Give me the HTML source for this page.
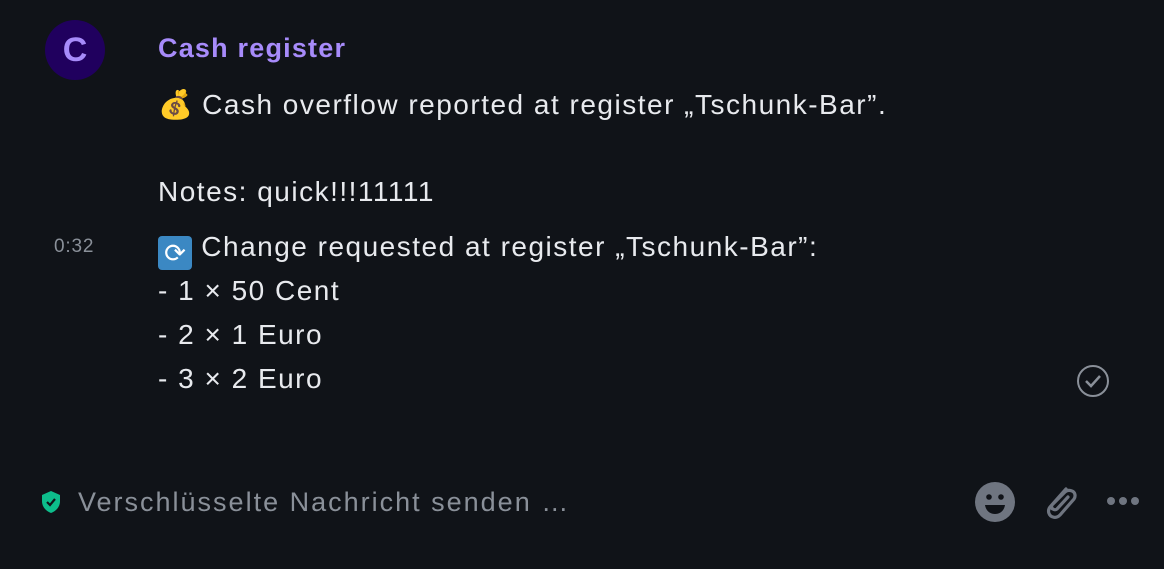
<!DOCTYPE html>
<html><head><style>
body{margin:0;width:1164px;height:569px;background:#101318;font-family:"Liberation Sans",sans-serif;position:relative;overflow:hidden;color:#e8eaee}
.a{position:absolute}
.t{font-size:28px;letter-spacing:1.5px;white-space:nowrap;line-height:44px}
</style></head><body>
<div class="a" style="left:45px;top:20px;width:60px;height:60px;border-radius:50%;background:#20005e;color:#a78bfa;font-weight:bold;font-size:34px;text-align:center;line-height:60px">C</div>
<div class="a" style="left:158px;top:28px;font-size:27px;font-weight:bold;color:#a78bfa;line-height:40px;letter-spacing:1.2px">Cash register</div>
<div class="a t" style="left:158px;top:83px"><span style="font-size:28px;letter-spacing:0">💰</span> Cash overflow reported at register „Tschunk-Bar”.</div>
<div class="a t" style="left:158px;top:170px">Notes: quick!!!11111</div>
<div class="a" style="left:54px;top:236px;font-size:19px;color:#8a9099;letter-spacing:0.8px">0:32</div>
<div class="a t" style="left:158px;top:225px"><span style="display:inline-block;width:34px;height:34px;background:#3b88c3;border-radius:4px;vertical-align:-6px;text-align:center;line-height:34px;color:#fff;font-size:26px;letter-spacing:0">⟳</span> Change requested at register „Tschunk-Bar”:</div>
<div class="a t" style="left:158px;top:269px">- 1 × 50 Cent</div>
<div class="a t" style="left:158px;top:313px">- 2 × 1 Euro</div>
<div class="a t" style="left:158px;top:357px">- 3 × 2 Euro</div>
<svg class="a" style="left:1076px;top:364px" width="34" height="34" viewBox="0 0 34 34"><circle cx="17" cy="17" r="15" fill="none" stroke="#8a9099" stroke-width="2"/><path d="M10 17l5 5 9-10" fill="none" stroke="#8a9099" stroke-width="2.5"/></svg>
<svg class="a" style="left:40px;top:490px" width="22" height="24" viewBox="0 0 22 24"><path d="M11 1L2 5v6c0 6 4 10 9 12 5-2 9-6 9-12V5z" fill="#0dbd8b"/><path d="M7 12l3 3 5-6" fill="none" stroke="#101318" stroke-width="2.2"/></svg>
<div class="a" style="left:78px;top:484px;font-size:27px;color:#8a9099;line-height:36px;letter-spacing:2px">Verschlüsselte Nachricht senden …</div>
<svg class="a" style="left:975px;top:482px" width="40" height="40" viewBox="0 0 40 40"><circle cx="20" cy="20" r="20" fill="#6f7580"/><circle cx="14" cy="15" r="2.8" fill="#101318"/><circle cx="26" cy="15" r="2.8" fill="#101318"/><path d="M10 23h20c-1 6-5 9-10 9s-9-3-10-9z" fill="#101318"/></svg>
<svg class="a" style="left:1040px;top:481px" width="40" height="42" viewBox="0 0 40 42"><path d="M26 8L10 26c-3 4-1 9 3 10 3 1 5 0 7-2l14-16c2-3 1-7-2-8-2-1-5-1-7 1L12 24c-1 2 0 4 1 4 1 1 3 1 4 0l11-12" fill="none" stroke="#6f7580" stroke-width="3.2" stroke-linecap="round"/></svg>
<svg class="a" style="left:1105px;top:494px" width="36" height="14"><circle cx="6" cy="7" r="4" fill="#6f7580"/><circle cx="18" cy="7" r="4" fill="#6f7580"/><circle cx="30" cy="7" r="4" fill="#6f7580"/></svg>
</body></html>
